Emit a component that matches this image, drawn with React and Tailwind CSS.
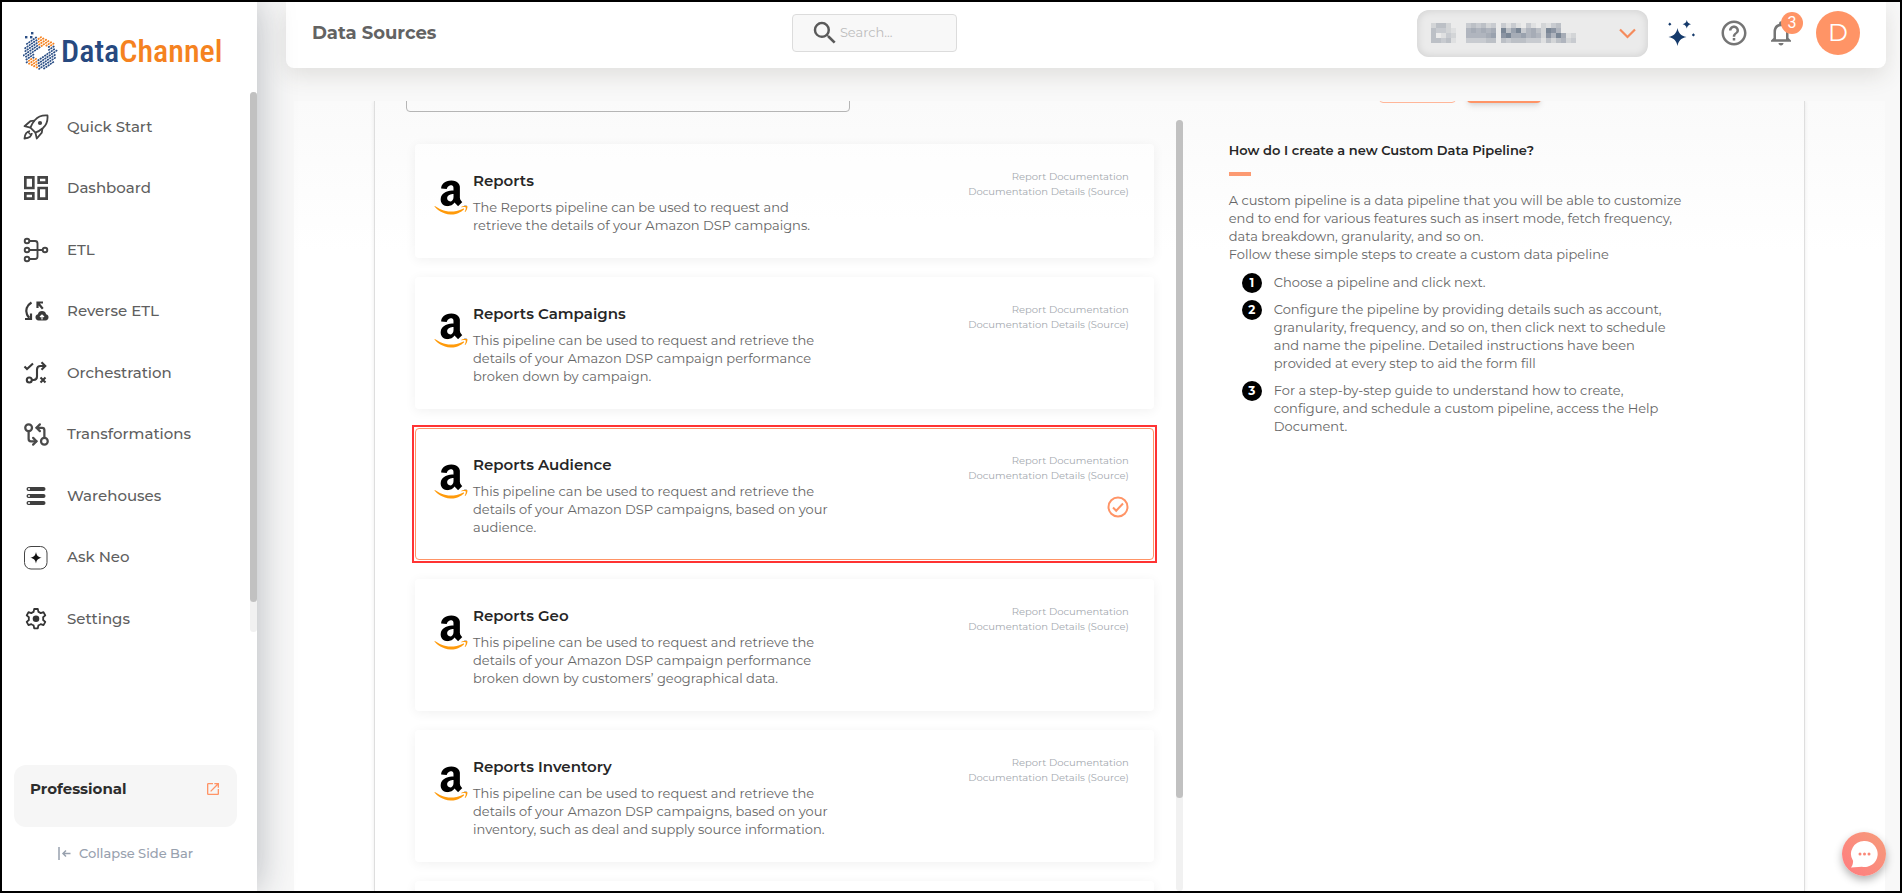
import { FaAmazon } from "react-icons/fa";
import { GitCompareArrows } from "lucide-react";
import {
  MdHelpOutline,
  MdNotificationsNone,
  MdOpenInNew,
  MdOutlineDashboard,
  MdSearch,
} from "react-icons/md";

const PIPELINES = [
  {
    title: "Reports",
    description:
      "The Reports pipeline can be used to request and\nretrieve the details of your Amazon DSP campaigns.",
  },
  {
    title: "Reports Campaigns",
    description:
      "This pipeline can be used to request and retrieve the\ndetails of your Amazon DSP campaign performance\nbroken down by campaign.",
  },
  {
    title: "Reports Audience",
    description:
      "This pipeline can be used to request and retrieve the\ndetails of your Amazon DSP campaigns, based on your\naudience.",
    selected: true,
  },
  {
    title: "Reports Geo",
    description:
      "This pipeline can be used to request and retrieve the\ndetails of your Amazon DSP campaign performance\nbroken down by customers’ geographical data.",
  },
  {
    title: "Reports Inventory",
    description:
      "This pipeline can be used to request and retrieve the\ndetails of your Amazon DSP campaigns, based on your\ninventory, such as deal and supply source information.",
  },
];

const STEPS = [
  "Choose a pipeline and click next.",
  "Configure the pipeline by providing details such as account,\ngranularity, frequency, and so on, then click next to schedule\nand name the pipeline. Detailed instructions have been\nprovided at every step to aid the form fill",
  "For a step-by-step guide to understand how to create,\nconfigure, and schedule a custom pipeline, access the Help\nDocument.",
];

function RocketIcon() {
  return (
    <svg viewBox="0 0 26 26" className="size-[26px]" fill="none" stroke="#444" strokeWidth="1.8" strokeLinejoin="round">
      <path d="M24.5 1.5c-5-.4-9.500 1-12.500 4.500-2 2.300-3.600 4.800-4.600 7.600l5 5c2.800-1 5.300-2.600 7.600-4.600 3.500-3.200 4.900-7.500 4.500-12.500z" />
      <path d="M11.500 6.600 7.300 7.200 1.500 12.200l5.900 1.400M19.400 14.500l-.6 4.200-5 5.800-1.400-5.900" />
      <path d="M7 17.200c-3 .2-5 2.300-5.500 7.300 5-.5 7.200-2.500 7.300-5.500" />
      <path d="M5 18l3 3" strokeWidth="1.400" />
      <circle cx="17" cy="9" r="2.100" fill="#444" stroke="none" />
    </svg>
  );
}

function EtlIcon() {
  return (
    <svg viewBox="0 0 26 26" className="size-[26px]" fill="none" stroke="#444" strokeWidth="1.900">
      <circle cx="4" cy="4" r="2.300" />
      <circle cx="4" cy="13" r="2.300" />
      <circle cx="4" cy="22" r="2.300" />
      <circle cx="22" cy="13" r="2.300" />
      <path d="M6.500 4H12a2.500 2.500 0 0 1 2.500 2.500v13A2.500 2.500 0 0 1 12 22H6.500M6.500 13h13" />
    </svg>
  );
}

function ReverseEtlIcon() {
  return (
    <svg viewBox="0 0 26 26" className="size-[26px]" fill="none" stroke="#3a3a3a" strokeWidth="2.200">
      <path d="M8.500 4.500C3.500 7.500 2.200 12.500 4 16.500c.5 1.200 1.300 2.300 2.400 3.300" />
      <path d="M2 21h6v-5.500" />
      <path d="M14.500 10V4.500h5.500M15 5l4.800 5.800" />
      <path
        d="M15.500 22.500a3.200 3.200 0 0 1-.6-6.300 4.200 4.200 0 0 1 8.200 0 3.200 3.200 0 0 1-.6 6.300z"
        fill="#3a3a3a"
        stroke="none"
      />
      <path d="M19 21.500v-4M17 19l2-2 2 2" stroke="#fff" strokeWidth="1.200" />
    </svg>
  );
}

function OrchestrationIcon() {
  return (
    <svg viewBox="0 0 26 26" className="size-[26px]" fill="none" stroke="#3a3a3a" strokeWidth="2.100">
      <path d="M1.500 6.500 4 9l6-5.500" />
      <circle cx="6.300" cy="20" r="2.500" />
      <path d="M9 20h1.500c2.500 0 3.500-1.200 3.500-3.500V9.500C14 7 15.500 6 17.500 6h4" />
      <path d="m18.500 2.200 3.800 3.800-3.800 3.800" />
      <path d="m17.500 17.500 5 5M22.500 17.500l-5 5" />
    </svg>
  );
}

function WarehouseIcon() {
  return (
    <svg viewBox="0 0 26 26" className="size-[26px]">
      {[4, 11, 18].map((y) => (
        <g key={y}>
          <rect x="3.500" y={y} width="19" height="4" rx="2" fill="#3f3f3f" />
          <circle cx="6" cy={y + 2} r="1" fill="#fff" />
        </g>
      ))}
    </svg>
  );
}

function NeoIcon() {
  return (
    <svg viewBox="0 0 26 26" className="size-[26px]">
      <rect x="1.500" y="1.500" width="22.500" height="22.500" rx="6.500" fill="#fff" stroke="#444" />
      <path d="M13 7c.7 3.700 2 5 5.700 5.700-3.700.7-5 2-5.700 5.700-.7-3.700-2-5-5.700-5.700C11 12 12.300 10.700 13 7z" fill="#111" />
    </svg>
  );
}

function SettingsIcon() {
  return (
    <svg viewBox="0 0 26 26" className="size-[26px]" fill="none" stroke="#333" strokeWidth="1.800" strokeLinejoin="round">
      <path d="M11.200 3h3.600l.6 2.900a7.500 7.500 0 0 1 2.300 1.300l2.800-1 1.800 3.200-2.200 1.900a7.600 7.600 0 0 1 0 2.700l2.200 1.900-1.800 3.200-2.800-1a7.500 7.500 0 0 1-2.300 1.300l-.6 2.900h-3.600l-.6-2.900a7.500 7.500 0 0 1-2.300-1.300l-2.800 1-1.800-3.200L5.900 14a7.600 7.600 0 0 1 0-2.700L3.700 9.400l1.800-3.200 2.800 1a7.500 7.500 0 0 1 2.300-1.300z" />
      <circle cx="13" cy="12.700" r="3.300" fill="#333" stroke="none" />
    </svg>
  );
}

const NAV = [
  { label: "Quick Start", icon: <RocketIcon /> },
  { label: "Dashboard", icon: <MdOutlineDashboard size={32} color="#444" /> },
  { label: "ETL", icon: <EtlIcon /> },
  { label: "Reverse ETL", icon: <ReverseEtlIcon /> },
  { label: "Orchestration", icon: <OrchestrationIcon /> },
  { label: "Transformations", icon: <GitCompareArrows size={27} color="#4a4a4a" strokeWidth={2} /> },
  { label: "Warehouses", icon: <WarehouseIcon /> },
  { label: "Ask Neo", icon: <NeoIcon /> },
  { label: "Settings", icon: <SettingsIcon /> },
];

// Globe made of small tiles on slanted rows, with a clear band across the middle
function globeTiles() {
  const tiles = [];
  for (let row = -7; row <= 7; row++) {
    for (let col = -7; col <= 7; col++) {
      const u = col * 2.7 + (row % 2) * 1.2;
      const v = row * 2.5;
      // rows climb to the right
      const dx = u * 0.82 + v * 0.57;
      const dy = -u * 0.57 + v * 0.82;
      const hole = ((u - 1) * (u - 1)) / 75 + (v * v) / 22 < 1;
      if (Math.hypot(dx, dy) > 16.5 || hole) continue;
      const orange = (dy < -7 && dx > -2) || (dx < -2 && dy > 5 && dx > -13);
      tiles.push({ x: 17 + dx, y: 21 + dy, fill: orange ? "#f58220" : "#2b4f86" });
    }
  }
  return tiles;
}

function GlobeLogo() {
  return (
    <svg viewBox="0 0 36 39" className="h-[39px] w-9 shrink-0">
      {globeTiles().map((t) => (
        <rect
          key={`${t.x}-${t.y}`}
          x={t.x - 1}
          y={t.y - 0.8}
          width="2.100"
          height="1.700"
          rx="0.400"
          fill={t.fill}
          transform={`rotate(-35 ${t.x} ${t.y})`}
        />
      ))}
      <g fill="#2b4f86">
        <rect x="8" y="0" width="2.400" height="2.400" />
        <rect x="2" y="4" width="2.400" height="2.400" />
        <rect x="7" y="4" width="2.400" height="2.400" />
      </g>
    </svg>
  );
}

function Sidebar() {
  return (
    <aside className="z-20 flex w-[255px] shrink-0 flex-col bg-white shadow-[0_0_36px_rgba(30,40,55,0.32)]">
      <a href="#home" className="flex h-[90px] shrink-0 items-center gap-[2px] pt-2 pl-[21px]">
        <GlobeLogo />
        <span className="font-['Roboto_Condensed','Roboto',sans-serif] text-[32px] leading-8 font-medium text-[#27497f]">
          Data<span className="text-[#f58220]">Channel</span>
        </span>
      </a>

      <div className="flex h-[540px] shrink-0 overflow-hidden">
        <nav className="grid h-[558px] flex-1 auto-rows-fr pt-1">
          {NAV.map((item) => (
            <a key={item.label} href="#nav" className="flex items-center gap-[15px] pl-[18px] text-[#5f5f5f]">
              <span className="flex w-8 shrink-0 justify-center">{item.icon}</span>
              <span className="text-[15px] font-medium">{item.label}</span>
            </a>
          ))}
        </nav>
        <div className="w-[7px] rounded-full bg-[#f1f1f1]">
          <div className="h-[510px] rounded-full bg-[#c1c1c1]" />
        </div>
      </div>

      <div className="mt-auto mr-5 ml-3 h-[62px] shrink-0 rounded-xl bg-[#f6f6f6] pt-3 pr-4 pl-4">
        <div className="flex items-center justify-between">
          <span className="text-[15px] leading-6 font-bold text-[#2d2d2d]">Professional</span>
          <button type="button" aria-label="Open plan">
            <MdOpenInNew size={16} color="#ff9466" />
          </button>
        </div>
      </div>
      <button
        type="button"
        className="mt-4 mb-7 ml-14 flex items-center gap-2 text-[13px] leading-5 font-medium text-[#98a1ae]"
      >
        <svg viewBox="0 0 13 13" className="size-[13px]" fill="none" stroke="#98a1ae" strokeWidth="1.500">
          <path d="M1 0v13M12.500 6.500H5M8 3.500l-3 3 3 3" />
        </svg>
        Collapse Side Bar
      </button>
    </aside>
  );
}

// Workspace name is redacted: one digit per block, higher is darker
const REDACTED = [
  "24420003434230313103102134000",
  "43321005656560947935642985000",
  "40132005555670896675652859612",
  "44341003333440434443331424523",
];
const SHADES = [
  "#ebebeb",
  "#dfe0e1",
  "#d3d5d7",
  "#c8cbd0",
  "#bcc0c6",
  "#b0b5be",
  "#a6acb6",
  "#9aa2ae",
  "#8b94a2",
  "#7a8695",
];

function RedactedName() {
  return (
    <svg viewBox="0 0 29 4" className="h-5 w-[145px]" shapeRendering="crispEdges">
      {REDACTED.map((row, y) =>
        [...row].map((level, x) =>
          level === "0" ? null : <rect key={`${x}-${y}`} x={x} y={y} width="1" height="1" fill={SHADES[level]} />
        )
      )}
    </svg>
  );
}

function Header() {
  return (
    <header className="mr-[14px] ml-[29px] flex h-[66px] shrink-0 items-center rounded-b-lg bg-white pr-[26px] pb-1 pl-[26px] shadow-[0_8px_22px_rgba(70,60,50,0.13)]">
      <h1 className="w-[31%] text-lg font-bold text-[#636363]">Data Sources</h1>
      <label className="flex h-[38px] w-[165px] items-center rounded border border-[#dcdcdc] bg-[#f8f8f8] pl-[17px]">
        <MdSearch size={30} color="#5a5a5a" className="shrink-0" />
        <input
          type="search"
          aria-label="Search"
          placeholder="Search..."
          className="w-full min-w-0 text-[13px] outline-none placeholder:text-[#bdbdbd]"
        />
      </label>

      <div className="ml-auto flex items-center">
        <button
          type="button"
          aria-label="Workspace"
          className="flex h-[47px] w-[231px] items-center justify-between rounded-xl bg-[#ebebeb] pr-3 pl-[14px] shadow-[inset_0_0_8px_rgba(0,0,0,0.13)]"
        >
          <RedactedName />
          <svg viewBox="0 0 17 11" className="h-[11px] w-[17px]" fill="none" stroke="#f58b5c" strokeWidth="2.200">
            <path d="m1 1.500 7.500 7.500L16 1.500" />
          </svg>
        </button>
        <button type="button" aria-label="Assistant" className="ml-5">
          <svg viewBox="0 0 27 26" className="h-[26px] w-[27px]" fill="#153a6b">
            <path d="M9.500 8c1.200 5.400 3.100 7.600 9 9-5.900 1.400-7.800 3.600-9 9-1.200-5.400-3.100-7.600-9-9 5.900-1.400 7.800-3.600 9-9z" />
            <path d="M18.800 0c.7 2.600 1.500 3.500 4.200 4.200-2.700.7-3.500 1.600-4.200 4.200-.7-2.600-1.500-3.500-4.200-4.200 2.700-.7 3.500-1.600 4.200-4.200z" />
            <path d="m1.800 2.600 1.600 1.600-1.600 1.600L.2 4.200zM25.400 13.300l1.600 1.600-1.600 1.600-1.600-1.600z" />
          </svg>
        </button>
        <button type="button" aria-label="Help" className="ml-6">
          <MdHelpOutline size={30} color="#757575" />
        </button>
        <button type="button" aria-label="Notifications" className="relative ml-[17px]">
          <MdNotificationsNone size={30} color="#757575" />
          <span className="absolute -top-[6px] -right-[7px] flex size-[22px] items-center justify-center rounded-full bg-[#ff9466] font-['Roboto',sans-serif] text-base text-white">
            3
          </span>
        </button>
        <button
          type="button"
          aria-label="Account"
          className="ml-5 flex size-11 items-center justify-center rounded-full bg-[#ff9466] text-2xl text-white"
        >
          D
        </button>
      </div>
    </header>
  );
}

function PipelineCard({ pipeline }) {
  return (
    <li className={pipeline.selected ? "outline-2 outline-offset-1 outline-[#ff3333]" : ""}>
      <article
        className={`flex rounded border pt-6 pr-6 pb-[23px] pl-[18px] ${
          pipeline.selected
            ? "border-[#ff9466] bg-white"
            : "border-transparent bg-white/50 shadow-[0_2px_12px_rgba(0,0,0,0.06)]"
        }`}
      >
        <FaAmazon fill="url(#amazon)" className="mt-[9px] mr-[5px] h-[39px] w-[34px] shrink-0" />
        <div className="flex-1">
          <h3 className="text-[15px] leading-6 font-semibold text-[#262626]">{pipeline.title}</h3>
          <p className="mt-[5px] text-[13px] leading-[18px] whitespace-pre-line text-[#666]">{pipeline.description}</p>
        </div>
        <div className="flex flex-col items-end text-[10px] leading-[15px] text-[#a4a9af]">
          <a href="#report-docs">Report Documentation</a>
          <a href="#source-docs">Documentation Details (Source)</a>
          {pipeline.selected && (
            <svg viewBox="0 0 22 22" className="mt-[13px] size-[22px]" fill="none" stroke="#ff9466" strokeWidth="2">
              <circle cx="11" cy="11" r="9.500" />
              <path d="m6 11.500 3.200 3.200L16 7.500" />
            </svg>
          )}
        </div>
      </article>
    </li>
  );
}

function PipelineList() {
  return (
    <div className="flex min-h-0 overflow-hidden">
      <ul className="flex min-w-0 flex-1 flex-col gap-[19px] pt-6 pr-[22px] pl-10">
        {PIPELINES.map((pipeline) => (
          <PipelineCard key={pipeline.title} pipeline={pipeline} />
        ))}
        <li className="h-[132px] shrink-0 rounded bg-white/50 shadow-[0_2px_12px_rgba(0,0,0,0.06)]" />
      </ul>
      <div className="mr-[2px] w-[7px] rounded-full bg-[#f1f1f1]">
        <div className="h-[88%] rounded-full bg-[#c1c1c1]" />
      </div>
    </div>
  );
}

function HelpPanel() {
  return (
    <section className="pt-5 pr-20 pl-11 text-[13px] leading-[18px] text-[#666]">
      <h2 className="leading-5 font-semibold text-[#262626]">How do I create a new Custom Data Pipeline?</h2>
      <div className="mt-3 h-1 w-[22px] bg-[#fc9a72]" />
      <p className="mt-[15px] whitespace-pre-line">
        {
          "A custom pipeline is a data pipeline that you will be able to customize\nend to end for various features such as insert mode, fetch frequency,\ndata breakdown, granularity, and so on.\nFollow these simple steps to create a custom data pipeline"
        }
      </p>
      <ol className="mt-[10px] flex flex-col gap-[9px] pl-[13px]">
        {STEPS.map((step, i) => (
          <li key={step} className="flex items-start gap-3">
            <span className="-mb-1 flex size-5 shrink-0 items-center justify-center rounded-full bg-black text-xs font-bold text-white">
              {i + 1}
            </span>
            <span className="whitespace-pre-line">{step}</span>
          </li>
        ))}
      </ol>
    </section>
  );
}

export default function App() {
  return (
    <div className="relative flex h-screen overflow-hidden border-2 border-black bg-[#f8f8f8] font-['Montserrat','Inter',sans-serif]">
      <svg className="absolute size-0" aria-hidden="true">
        <linearGradient id="amazon" gradientUnits="userSpaceOnUse" x1="0" y1="0" x2="0" y2="512">
          <stop offset="0.72" stopColor="#000" />
          <stop offset="0.72" stopColor="#ff9a0a" />
        </linearGradient>
      </svg>

      <Sidebar />

      <div className="flex min-w-0 flex-1 flex-col">
        <Header />
        <main className="mt-[33px] mr-[15px] ml-[37px] flex min-h-0 flex-1 overflow-hidden bg-linear-to-b from-[#fafafa] to-white to-[150px] px-20">
          <div className="flex min-w-0 flex-1 flex-col border-x border-[#dedede] shadow-[0_0_4px_rgba(0,0,0,0.08)]">
            <div className="grid shrink-0 grid-cols-[17fr_13fr] grid-rows-[11px] items-end">
              <input
                type="text"
                aria-label="Pipeline filter"
                className="ml-[31px] h-10 w-[444px] rounded border border-[#b5b5b5] bg-transparent px-3"
              />
              <div className="mb-[9px] flex gap-[11px] pl-[194px]">
                <button type="button" aria-label="Back" className="h-9 w-[77px] rounded border border-[#ffb699]" />
                <button type="button" aria-label="Next" className="h-9 w-[74px] rounded bg-[#ff9466] shadow-md" />
              </div>
            </div>
            <div className="mt-2 grid min-h-0 flex-1 grid-cols-[17fr_13fr] grid-rows-[minmax(0,1fr)]">
              <PipelineList />
              <HelpPanel />
            </div>
          </div>
        </main>
      </div>

      <button
        type="button"
        aria-label="Open chat"
        className="absolute right-[14px] bottom-[15px] z-30 flex size-11 items-center justify-center rounded-full bg-linear-to-tr from-[#ff7b80] to-[#f59c7a] shadow-[0_4px_8px_rgba(0,0,0,0.3)]"
      >
        <svg viewBox="0 0 28 28" className="size-7">
          <path
            d="M14.500 1a13 13 0 1 1-2.600 25.700L1 27.500c1.300-1.400 1.900-3.300 2.100-6.500A13 13 0 0 1 14.500 1z"
            fill="#fff"
          />
          <g fill="#fa8878">
            <circle cx="10" cy="14" r="1.500" />
            <circle cx="14.500" cy="14" r="1.500" />
            <circle cx="19" cy="14" r="1.500" />
          </g>
        </svg>
      </button>
    </div>
  );
}
